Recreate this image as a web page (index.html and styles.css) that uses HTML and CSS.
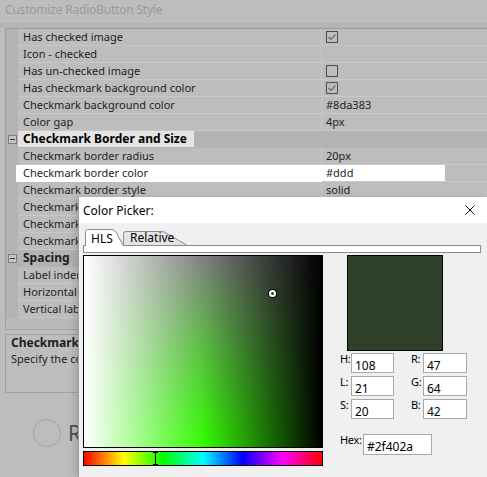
FILE: index.html
```html
<!DOCTYPE html>
<html lang="en">
<head>
    <meta charset="UTF-8">
    <meta name="viewport" content="width=device-width, initial-scale=1.0">
    <title>Customize RadioButton Style</title>
    <link rel="stylesheet" href="styles.css">
</head>
<body>
    <!-- Property editor (dimmed behind the dialog) -->
    <div class="editor">
        <div class="editor-title">Customize RadioButton Style</div>
        <div class="editor-band"></div>

        <div class="grid">
            <div class="row"><span class="gutter"></span><span class="name">Has checked image</span><span class="value"><span class="check on"><svg viewBox="0 0 10 10"><polyline points="1.5,5 4,7.5 8.5,2.5"/></svg></span></span></div>
            <div class="row"><span class="gutter"></span><span class="name">Icon - checked</span><span class="value"></span></div>
            <div class="row"><span class="gutter"></span><span class="name">Has un-checked image</span><span class="value"><span class="check"></span></span></div>
            <div class="row"><span class="gutter"></span><span class="name">Has checkmark background color</span><span class="value"><span class="check on"><svg viewBox="0 0 10 10"><polyline points="1.5,5 4,7.5 8.5,2.5"/></svg></span></span></div>
            <div class="row"><span class="gutter"></span><span class="name">Checkmark background color</span><span class="value">#8da383</span></div>
            <div class="row"><span class="gutter"></span><span class="name">Color gap</span><span class="value">4px</span></div>

            <div class="row category"><span class="gutter"><span class="toggle"></span></span><span class="name"><span class="cat-label focused">Checkmark Border and Size</span></span><span class="value"></span></div>
            <div class="row"><span class="gutter"></span><span class="name">Checkmark border radius</span><span class="value">20px</span></div>
            <div class="row selected"><span class="gutter"></span><span class="name">Checkmark border color</span><span class="value"><span class="edit">#ddd</span></span></div>
            <div class="row"><span class="gutter"></span><span class="name">Checkmark border style</span><span class="value">solid</span></div>
            <div class="row"><span class="gutter"></span><span class="name short">Checkmark</span><span class="value"></span></div>
            <div class="row"><span class="gutter"></span><span class="name short">Checkmark</span><span class="value"></span></div>
            <div class="row"><span class="gutter"></span><span class="name short">Checkmark</span><span class="value"></span></div>

            <div class="row category"><span class="gutter"><span class="toggle"></span></span><span class="name"><span class="cat-label">Spacing</span></span><span class="value"></span></div>
            <div class="row"><span class="gutter"></span><span class="name short">Label inden</span><span class="value"></span></div>
            <div class="row"><span class="gutter"></span><span class="name short">Horizontal s</span><span class="value"></span></div>
            <div class="row"><span class="gutter"></span><span class="name short">Vertical labe</span><span class="value"></span></div>
            <div class="grid-fill"></div>
        </div>

        <div class="desc">
            <div class="desc-title">Checkmark</div>
            <div class="desc-text">Specify the co</div>
        </div>

        <div class="preview">
            <span class="radio"></span>
            <span class="radio-label">R</span>
        </div>
    </div>

    <!-- Color picker dialog -->
    <div class="picker">
        <div class="picker-titlebar">
            <span>Color Picker:</span>
            <svg class="close" viewBox="0 0 10 10"><path d="M0.5,0.5 L9.5,9.5 M9.5,0.5 L0.5,9.5"/></svg>
        </div>
        <div class="picker-body">
            <div class="tabs">
                <div class="tab tab-hls">
                    <svg class="tab-shape" viewBox="0 0 39 17"><path d="M0.5,17 V2.5 Q0.5,0.5 2.5,0.5 H27 Q29,0.5 31,3 L38.5,17"/></svg>
                    <span class="tab-text">HLS</span>
                </div>
                <div class="tab tab-relative">
                    <svg class="tab-shape" viewBox="0 0 64 14"><path d="M0.5,14 V2.5 Q0.5,0.5 2.5,0.5 H39 Q41,0.5 43,2 L63.5,14"/></svg>
                    <span class="tab-text">Relative</span>
                </div>
            </div>
            <div class="tab-panel"></div>

            <div class="picker-main">
                <div class="picker-left">
                    <div class="sl-box">
                        <div class="sl-gray"></div>
                        <span class="sl-marker"></span>
                    </div>
                    <div class="hue-bar">
                        <span class="hue-marker"></span>
                    </div>
                </div>

                <div class="picker-right">
                    <div class="swatch"></div>
                    <div class="fields">
                        <label>H:</label><input type="text" value="108">
                        <label>R:</label><input type="text" value="47">
                        <label>L:</label><input type="text" value="21">
                        <label>G:</label><input type="text" value="64">
                        <label>S:</label><input type="text" value="20">
                        <label>B:</label><input type="text" value="42">
                    </div>
                    <div class="hex-row">
                        <label>Hex:</label><input type="text" class="hex" value="#2f402a">
                    </div>
                </div>
            </div>
        </div>
    </div>
</body>
</html>
```

FILE: styles.css
```css
* {
    box-sizing: border-box;
}
html, body {
    margin: 0;
    height: 100%;
}
body {
    position: relative;
    overflow: hidden;
    background-color: #bdbdbd;
    font-family: "Noto Sans", "Open Sans", sans-serif;
    font-size: 11px;
    color: #1d1d1d;
}

/* property editor */
.editor-title {
    height: 23px;
    padding: 1px 0 0 5px;
    font-size: 12px;
    letter-spacing: -0.2px;
    line-height: 18px;
    color: #9a9a9a;
}
.editor-band {
    height: 5px;
    background-color: #b5b5b5;
}
.grid {
    width: 620px;
    margin-left: 5px;
    border: 1px solid #a2a2a2;
    border-top-color: #9c9c9c;
}
.row {
    display: flex;
    height: 17px;
    line-height: 16px;
}
.gutter {
    flex: none;
    width: 12px;
    background-color: #b3b3b3;
    display: flex;
    align-items: center;
    justify-content: center;
}
.name {
    flex: none;
    width: 304px;
    padding-left: 5px;
    border-bottom: 1px solid #c8c8c8;
    border-right: 1px solid #c8c8c8;
    white-space: nowrap;
    overflow: hidden;
}
.value {
    flex: 1;
    padding-left: 4px;
    border-bottom: 1px solid #c8c8c8;
}
.check {
    display: inline-block;
    width: 12px;
    height: 12px;
    margin-top: 2px;
    border: 1px solid #4e4e4e;
    vertical-align: top;
}
.check svg {
    display: block;
    width: 10px;
    height: 10px;
    fill: none;
    stroke: #6a6a6a;
    stroke-width: 1.2;
}
.category .name,
.category .value {
    background-color: #b3b3b3;
    border-right: none;
    border-bottom-color: #b3b3b3;
    font-weight: bold;
    font-size: 12px;
    padding-left: 0;
}
.cat-label {
    display: inline-block;
    height: 16px;
    padding: 0 7px 0 5px;
}
.cat-label.focused {
    background-color: #e4e4e4;
    color: #000;
}
.toggle {
    position: relative;
    width: 9px;
    height: 9px;
    border: 1px solid #7d7d7d;
    background-color: #c4c4c4;
}
.toggle::after {
    content: "";
    position: absolute;
    left: 1px;
    top: 3px;
    width: 5px;
    height: 1px;
    background-color: #3a3a3a;
}
.selected .name,
.selected .value {
    background-color: #fff;
    border-color: #fff;
}
.selected .gutter {
    background: linear-gradient(to right, #b3b3b3 10px, #fff 10px);
}
.selected .value {
    background: linear-gradient(to right, #fff 123px, transparent 123px);
    border-bottom-color: #c8c8c8;
}
.grid-fill {
    height: 11px;
    background-color: #b9b9b9;
}
.desc {
    width: 620px;
    height: 59px;
    margin: 4px 0 0 5px;
    padding: 0 5px;
    border: 1px solid #a2a2a2;
    line-height: 16px;
}
.desc-title {
    font-weight: bold;
    font-size: 12px;
    white-space: nowrap;
}
.desc-text {
    white-space: nowrap;
}
.preview {
    display: flex;
    align-items: center;
    gap: 7px;
    padding: 26px 0 0 33px;
}
.radio {
    width: 28px;
    height: 28px;
    border-radius: 50%;
    border: 1px solid #a6a6a6;
}
.radio-label {
    font-size: 21px;
    color: #45505c;
}

/* color picker dialog */
.picker {
    position: absolute;
    left: 78px;
    top: 197px;
    right: 0;
    bottom: 0;
    background-color: #f0f0f0;
    border-left: 1px solid #9e9e9e;
    box-shadow: -4px 0 6px rgba(0, 0, 0, 0.12);
    font-size: 12px;
    color: #000;
}
.picker-titlebar {
    height: 26px;
    display: flex;
    align-items: center;
    justify-content: space-between;
    padding: 0 12px 0 4px;
    background-color: #fff;
}
.close {
    width: 10px;
    height: 10px;
    stroke: #111;
    stroke-width: 1;
}
.picker-body {
    padding: 6px 6px 0 4px;
}
.tabs {
    display: flex;
    align-items: flex-end;
    height: 16px;
    margin-left: 2px;
}
.tab {
    position: relative;
    flex: none;
}
.tab-shape {
    position: absolute;
    left: 0;
    top: 0;
    width: 100%;
    height: 100%;
    stroke: #8a8d94;
    stroke-width: 1;
}
.tab-hls {
    width: 38px;
    height: 17px;
    margin-bottom: -1px;
    z-index: 1;
}
.tab-hls .tab-shape {
    width: 39px;
    fill: #fff;
}
.tab-relative {
    width: 64px;
    height: 14px;
}
.tab-relative .tab-shape {
    fill: #e4e4e4;
}
.tab-text {
    position: relative;
    display: block;
    line-height: 14px;
}
.tab-hls .tab-text {
    padding: 3px 0 0 6px;
}
.tab-relative .tab-text {
    padding: 0 0 0 7px;
}
.tab-panel {
    height: 8px;
    border: 1px solid #8a8a8a;
    background-color: #fff;
}
.picker-main {
    display: flex;
    margin-top: 2px;
}
.picker-left {
    width: 240px;
    flex: none;
}

/* saturation / lightness plane for hue 108 */
.sl-box {
    position: relative;
    height: 193px;
    border: 1px solid #000;
    background: linear-gradient(to right, #fff, hsl(108, 100%, 50%), #000);
}
.sl-gray {
    height: 100%;
    background: linear-gradient(to right, #fff, #808080, #000);
    -webkit-mask-image: linear-gradient(to bottom, #000, transparent);
    mask-image: linear-gradient(to bottom, #000, transparent);
}
.sl-marker {
    position: absolute;
    left: 185px;
    top: 34px;
    width: 7px;
    height: 7px;
    border-radius: 50%;
    border: 2px solid #fff;
    box-shadow: 0 0 0 1px #000;
}
.hue-bar {
    position: relative;
    height: 15px;
    margin-top: 3px;
    border: 1px solid #000;
    background: linear-gradient(to right, #f00, #ff0, #0f0, #0ff, #00f, #f0f, #f00);
}
.hue-marker {
    position: absolute;
    left: 71px;
    top: -1px;
    bottom: -1px;
    width: 1px;
    background-color: #000;
}
.hue-marker::before,
.hue-marker::after {
    content: "";
    position: absolute;
    left: -2px;
    width: 5px;
    height: 2px;
    background-color: #000;
}
.hue-marker::before {
    top: 0;
}
.hue-marker::after {
    bottom: 0;
}
.picker-right {
    margin-left: 17px;
}
.swatch {
    width: 96px;
    height: 96px;
    margin-left: 7px;
    border: 1px solid #000;
    background-color: #2f402a;
}
.fields {
    display: grid;
    grid-template-columns: 11px 43px 29px 44px;
    grid-auto-rows: 20px;
    row-gap: 3px;
    margin-top: 2px;
}
.fields label,
.hex-row label {
    font-size: 11px;
    letter-spacing: -0.3px;
    line-height: 12px;
    white-space: nowrap;
}
.fields label:nth-child(4n+3) {
    margin-left: 17px;
}
input {
    width: 100%;
    height: 100%;
    margin: 0;
    padding: 4px 0 0 3px;
    border: 1px solid #a9a9a9;
    background-color: #fff;
    font-family: "Noto Sans", "Open Sans", sans-serif;
    font-size: 12px;
    line-height: 14px;
    color: #000;
    outline: none;
}
.hex-row {
    display: flex;
    height: 21px;
    margin-top: 15px;
}
.hex-row label {
    width: 23px;
    flex: none;
}
.hex-row input {
    width: 69px;
}
```
